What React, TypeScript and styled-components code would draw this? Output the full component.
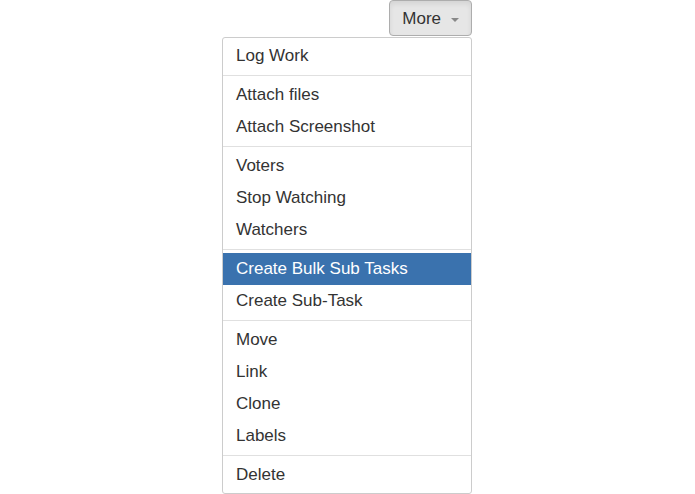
import React from "react";
import styled, { createGlobalStyle } from "styled-components";

const Global = createGlobalStyle`
  html, body { margin: 0; padding: 0; background: #fff; }
  body { font-family: "Liberation Sans", Arial, sans-serif; color: #333; }
`;

const Page = styled.div`
  display: flex;
  justify-content: center;
  padding-right: 1px;
`;

const Dropdown = styled.div`
  width: 250px;
  display: flex;
  flex-direction: column;
  align-items: flex-end;
`;

const Toggle = styled.button`
  display: flex;
  align-items: center;
  gap: 10px;
  height: 36px;
  padding: 7px 12px 5px;
  font-family: "Liberation Sans", Arial, sans-serif;
  font-size: 17px;
  line-height: 22px;
  color: #333;
  background: #e6e6e6;
  border: 1px solid #adadad;
  border-radius: 4px;
  box-shadow: inset 0 3px 5px rgba(0, 0, 0, 0.08);
`;

const Caret = styled.span`
  display: inline-block;
  width: 0;
  height: 0;
  border-left: 4px solid transparent;
  border-right: 4px solid transparent;
  border-top: 4px solid #888;
  margin-top: 1px;
`;

const Menu = styled.ul`
  list-style: none;
  margin: 1px 0 0;
  padding: 2px 0;
  width: 100%;
  box-sizing: border-box;
  background: #fff;
  border: 1px solid #ccc;
  border-radius: 3px;
`;

const Item = styled.li<{ $active?: boolean }>`
  padding: 5px 13px;
  font-size: 17px;
  line-height: 22px;
  white-space: nowrap;
  color: ${(p) => (p.$active ? "#fff" : "#333")};
  background: ${(p) => (p.$active ? "#3a72ae" : "transparent")};
`;

const Divider = styled.li`
  height: 1px;
  margin: 3px 0;
  background: #e0e0e0;
`;

const groups: string[][] = [
  ["Log Work"],
  ["Attach files", "Attach Screenshot"],
  ["Voters", "Stop Watching", "Watchers"],
  ["Create Bulk Sub Tasks", "Create Sub-Task"],
  ["Move", "Link", "Clone", "Labels"],
  ["Delete"],
];

export default function App() {
  return (
    <>
      <Global />
      <Page>
        <Dropdown>
          <Toggle>
            More <Caret />
          </Toggle>
          <Menu>
            {groups.map((g, gi) => (
              <React.Fragment key={gi}>
                {gi > 0 && <Divider />}
                {g.map((label) => (
                  <Item key={label} $active={label === "Create Bulk Sub Tasks"}>
                    {label}
                  </Item>
                ))}
              </React.Fragment>
            ))}
          </Menu>
        </Dropdown>
      </Page>
    </>
  );
}
